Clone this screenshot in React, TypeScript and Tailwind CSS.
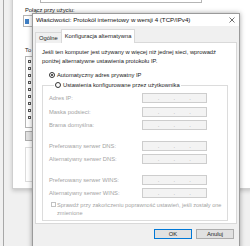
import React from 'react';

const labels = [
  { text: 'Adres IP:', mt: 'mt-[3px]' },
  { text: 'Maska podsieci:', mt: 'mt-[4px]' },
  { text: 'Brama domyślna:', mt: 'mt-[3px]' },
  { text: 'Preferowany serwer DNS:', mt: 'mt-[11px]' },
  { text: 'Alternatywny serwer DNS:', mt: 'mt-[3px]' },
  { text: 'Preferowany serwer WINS:', mt: 'mt-[11px]' },
  { text: 'Alternatywny serwer WINS:', mt: 'mt-[3px]' },
];

function IpBox() {
  return (
    <div className="w-[65px] h-[10px] bg-[#f3f3f3] border border-[#cdcdcd] grid grid-cols-4 text-[#a0a0a0] leading-[8px]">
      <span />
      <span className="-ml-[1px]">.</span>
      <span className="-ml-[1px]">.</span>
      <span className="-ml-[1px]">.</span>
    </div>
  );
}

function CloseIcon() {
  return (
    <svg width="6" height="6" viewBox="0 0 6 6" className="text-[#333]">
      <path d="M0.5 0.5 L5.5 5.5 M5.5 0.5 L0.5 5.5" stroke="currentColor" strokeWidth="0.7" />
    </svg>
  );
}

function BackgroundWindow() {
  const items = [0, 1, 2, 3, 4, 5, 6, 7, 8];
  return (
    <div className="absolute left-[12px] top-[-8px] w-[240px] h-[197px] bg-white border-l border-b border-[#cfcfcf] shadow-[0_2px_4px_rgba(0,0,0,0.18)]">
      <div className="flex flex-col pl-[12px] text-[5.8px] text-[#1a1a1a]">
        <div className="ml-[15px] w-[162px] h-[11px] border-x border-b border-[#b5b5b5]" />
        <div className="mt-[3px] leading-[8px] whitespace-nowrap">Połącz przy użyciu:</div>
        <div className="mt-[1px] -ml-[2px] w-[60px] h-[12px] border border-[#b5b5b5] flex items-center pl-[1px]">
          <div className="w-[4px] h-[5px] bg-[#3f7fc4]" />
        </div>
        <div className="mt-[19px] leading-[8px] whitespace-nowrap">To połączenie</div>
        <div className="mt-[2px] w-[80px] h-[72px] border border-[#b5b5b5] flex flex-col pt-[1px] pl-[2px]">
          {items.map((i) => (
            <div key={i} className="h-[7px] flex items-center gap-[1px]">
              <div className="w-[3px] h-[3px] border border-[#555]" />
              <div className="w-[3px] h-[3px] bg-[#7a8ea8]" />
            </div>
          ))}
        </div>
        <div className="mt-[3px] w-[40px] h-[10px] bg-[#e1e1e1] border border-[#adadad]" />
        <div className="mt-[6px] w-[200px] h-[35px] border border-[#dcdcdc]" />
      </div>
    </div>
  );
}

export default function App() {
  return (
    <div className="relative w-[250px] h-[246px] overflow-hidden bg-[#f0f0f0] font-['Liberation_Sans',Arial,sans-serif]">
      <div className="absolute left-[3px] top-0 bottom-0 w-px bg-[#a8a8a8]" />
      <BackgroundWindow />

      {/* Dialog */}
      <div className="absolute left-[32px] top-[13px] w-[208px] h-[245px] bg-[#f0f0f0] border border-[#9a9a9a] shadow-[0_0_5px_rgba(0,0,0,0.35)] flex flex-col">
        {/* Title bar */}
        <div className="h-[12px] bg-white flex items-center justify-between pl-[3px] pr-[4px] text-[6.2px] text-[#111]">
          <span className="whitespace-nowrap">Właściwości: Protokół internetowy w wersji 4 (TCP/IPv4)</span>
          <CloseIcon />
        </div>

        {/* Tabs */}
        <div className="pt-[3px] px-[2px]">
          <div className="flex items-end text-[5.8px] text-[#1a1a1a] -mb-px relative z-10">
            <div className="h-[11px] px-[3px] flex items-center border border-b-0 border-[#d9d9d9] bg-[#f0f0f0]">
              Ogólne
            </div>
            <div className="h-[14px] px-[3px] flex items-center border border-b-0 border-[#d9d9d9] bg-white -ml-px">
              Konfiguracja alternatywna
            </div>
          </div>
        </div>

        {/* Panel */}
        <div className="mx-[2px] bg-white border border-[#d9d9d9] pt-[5px] pb-[2px] pl-[6px] pr-[8px] text-[5.8px] text-[#1a1a1a]">
          <p className="leading-[9px]">
            Jeśli ten komputer jest używany w więcej niż jednej sieci, wprowadź
            <br />
            poniżej alternatywne ustawienia protokołu IP.
          </p>

          <label className="mt-[4px] ml-[7px] h-[10px] flex items-center gap-[2px]">
            <span className="w-[6px] h-[6px] rounded-full border border-[#333] flex items-center justify-center">
              <span className="w-[2px] h-[2px] rounded-full bg-[#222]" />
            </span>
            <span className="whitespace-nowrap">Automatyczny adres prywatny IP</span>
          </label>

          <fieldset className="border border-[#dcdcdc] pl-[6px] pb-[3px]">
            <legend className="ml-[5px] px-[1px] h-[10px] flex items-center gap-[2px]">
              <span className="w-[6px] h-[6px] rounded-full border border-[#333]" />
              <span className="whitespace-nowrap">Ustawienia konfigurowane przez użytkownika</span>
            </legend>

            <div className="flex flex-col text-[#a3a3a3]">
              {labels.map((l) => (
                <div key={l.text} className={`${l.mt} grid grid-cols-[93px_65px] items-center`}>
                  <span className="whitespace-nowrap">{l.text}</span>
                  <IpBox />
                </div>
              ))}
              <div className="mt-[3px] ml-[2px] flex items-start gap-[1px]">
                <span className="mt-[1px] w-[5px] h-[5px] border border-[#c2c2c2] shrink-0" />
                <span className="leading-[8px] whitespace-nowrap text-[5.6px]">
                  Sprawdź przy zakończeniu poprawność ustawień, jeśli zostały one
                  <br />
                  zmienione
                </span>
              </div>
            </div>
          </fieldset>
        </div>

        {/* Buttons */}
        <div className="mt-[5px] pr-[5px] flex justify-end gap-[4px] text-[5.8px] text-[#1a1a1a]">
          <button className="w-[38px] h-[10px] bg-[#e1e1e1] border border-[#0078d7] flex items-center justify-center">
            OK
          </button>
          <button className="w-[38px] h-[10px] bg-[#e1e1e1] border border-[#adadad] flex items-center justify-center">
            Anuluj
          </button>
        </div>
      </div>
    </div>
  );
}
